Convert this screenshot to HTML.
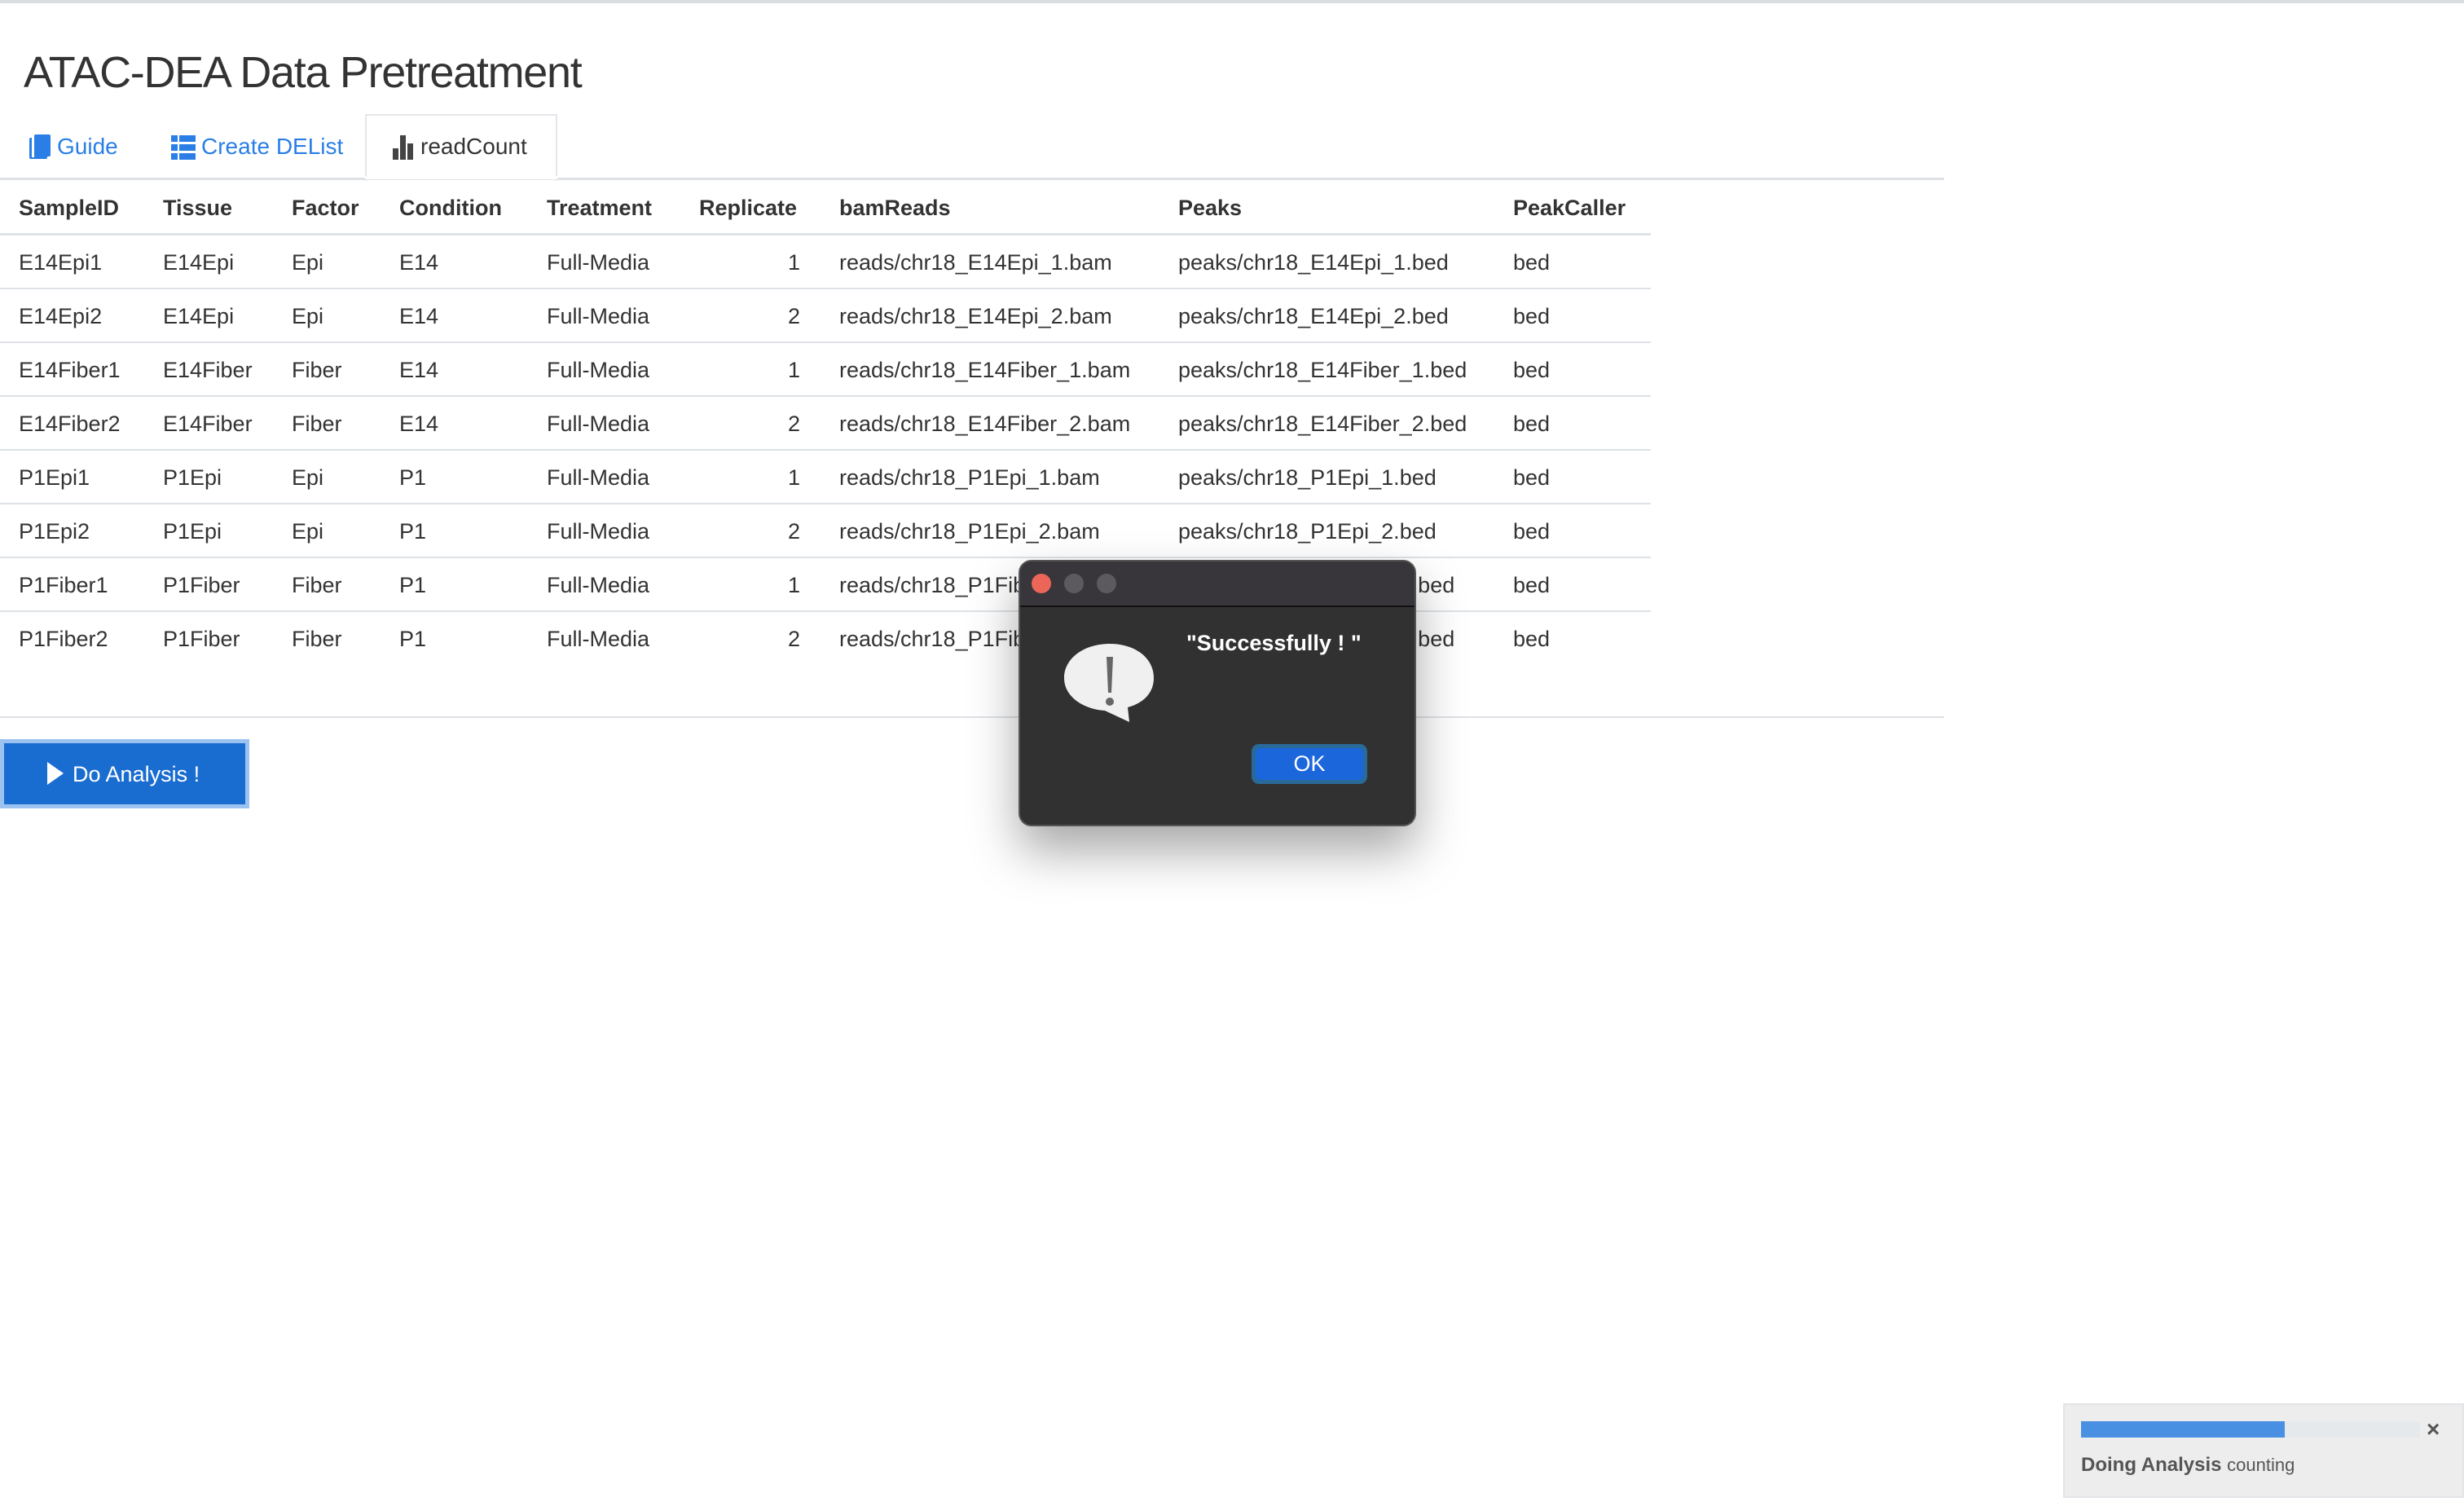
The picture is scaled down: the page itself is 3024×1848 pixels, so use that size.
<!DOCTYPE html>
<html><head><meta charset="utf-8"><style>
*{margin:0;padding:0;box-sizing:border-box}
body{width:3024px;height:1848px;background:#fff;position:relative;overflow:hidden;font-family:"Liberation Sans",sans-serif;color:#333}
.a{position:absolute;white-space:nowrap}
.c{position:absolute;font-size:27px;color:#333;white-space:nowrap}
.h{font-weight:bold;font-size:27px}
.line{position:absolute;left:0;height:3px;background:#dee2e6}
</style></head><body>
<div class="a" style="left:0;top:0;width:3024px;height:4px;background:#dadde0"></div>
<div class="a" style="left:29px;top:58px;font-size:54px;color:#333;letter-spacing:-1.3px">ATAC-DEA Data Pretreatment</div>
<!-- tabs -->
<div class="a" style="left:448px;top:140px;width:236px;height:82px;border:2px solid #e3e6e9;border-bottom:none;background:#fff"></div>
<div class="line" style="top:218px;width:2386px"></div>
<div class="a" style="left:448px;top:216px;width:236px;height:4px;background:#fff"></div>
<svg class="a" style="left:34px;top:164px" width="30" height="32" viewBox="0 0 30 32"><rect x="2" y="5" width="22" height="26" rx="2" fill="#2a7ee6"/><rect x="8" y="1" width="20" height="27" rx="2" fill="#2a7ee6"/><rect x="5" y="4" width="3" height="25" fill="#fff"/></svg>
<div class="a" style="left:70px;top:164px;font-size:28px;color:#2a7ee6">Guide</div>
<svg class="a" style="left:210px;top:166px" width="30" height="30" viewBox="0 0 30 30" fill="#2a7ee6"><rect x="0" y="0" width="8" height="8"/><rect x="10" y="0" width="20" height="8"/><rect x="0" y="11" width="8" height="8"/><rect x="10" y="11" width="20" height="8"/><rect x="0" y="22" width="8" height="8"/><rect x="10" y="22" width="20" height="8"/></svg>
<div class="a" style="left:247px;top:164px;font-size:28px;color:#2a7ee6">Create DEList</div>
<svg class="a" style="left:482px;top:166px" width="28" height="30" viewBox="0 0 28 30" fill="#444"><rect x="0" y="16" width="7" height="14"/><rect x="9" y="0" width="7" height="30"/><rect x="18" y="10" width="7" height="20"/></svg>
<div class="a" style="left:516px;top:164px;font-size:28px;color:#333">readCount</div>
<!-- table -->
<div class="line" style="top:286px;width:2026px"></div>
<div class="c h" style="left:23px;top:240px">SampleID</div>
<div class="c h" style="left:200px;top:240px">Tissue</div>
<div class="c h" style="left:358px;top:240px">Factor</div>
<div class="c h" style="left:490px;top:240px">Condition</div>
<div class="c h" style="left:671px;top:240px">Treatment</div>
<div class="c h" style="left:858px;top:240px">Replicate</div>
<div class="c h" style="left:1030px;top:240px">bamReads</div>
<div class="c h" style="left:1446px;top:240px">Peaks</div>
<div class="c h" style="left:1857px;top:240px">PeakCaller</div>
<div id="rows"></div>
<script>
var d=[["E14Epi1","E14Epi","Epi","E14",1,"reads/chr18_E14Epi_1.bam","peaks/chr18_E14Epi_1.bed"],
["E14Epi2","E14Epi","Epi","E14",2,"reads/chr18_E14Epi_2.bam","peaks/chr18_E14Epi_2.bed"],
["E14Fiber1","E14Fiber","Fiber","E14",1,"reads/chr18_E14Fiber_1.bam","peaks/chr18_E14Fiber_1.bed"],
["E14Fiber2","E14Fiber","Fiber","E14",2,"reads/chr18_E14Fiber_2.bam","peaks/chr18_E14Fiber_2.bed"],
["P1Epi1","P1Epi","Epi","P1",1,"reads/chr18_P1Epi_1.bam","peaks/chr18_P1Epi_1.bed"],
["P1Epi2","P1Epi","Epi","P1",2,"reads/chr18_P1Epi_2.bam","peaks/chr18_P1Epi_2.bed"],
["P1Fiber1","P1Fiber","Fiber","P1",1,"reads/chr18_P1Fiber_1.bam","peaks/chr18_P1Fiber_1.bed"],
["P1Fiber2","P1Fiber","Fiber","P1",2,"reads/chr18_P1Fiber_2.bam","peaks/chr18_P1Fiber_2.bed"]];
var h="",xs=[23,200,358,490];
d.forEach(function(r,i){var t=307+i*66;
for(var k=0;k<4;k++)h+='<div class="c" style="left:'+xs[k]+'px;top:'+t+'px">'+r[k]+'</div>';
h+='<div class="c" style="left:671px;top:'+t+'px">Full-Media</div>';
h+='<div class="c" style="left:940px;width:42px;text-align:right;top:'+t+'px">'+r[4]+'</div>';
h+='<div class="c" style="left:1030px;top:'+t+'px">'+r[5]+'</div>';
h+='<div class="c" style="left:1446px;top:'+t+'px">'+r[6]+'</div>';
h+='<div class="c" style="left:1857px;top:'+t+'px">bed</div>';
if(i<7)h+='<div class="line" style="top:'+(353+i*66)+'px;width:2026px;height:2px"></div>';});
document.getElementById("rows").innerHTML=h;
</script>
<div class="line" style="top:879px;width:2386px;height:2px"></div>
<!-- button -->
<div class="a" style="left:0;top:907px;width:306px;height:85px;background:#1a6dd0;border:5px solid #9cc3f0"></div>
<svg class="a" style="left:58px;top:935px" width="20" height="28" viewBox="0 0 20 28"><path d="M0 0L20 14L0 28Z" fill="#fff"/></svg>
<div class="a" style="left:89px;top:935px;font-size:27px;color:#fff">Do Analysis !</div>
<!-- dialog -->
<div class="a" style="left:1250px;top:687px;width:488px;height:327px;background:#313131;border:2px solid #555;border-radius:16px;box-shadow:0 30px 60px rgba(0,0,0,.35);overflow:hidden">
<div style="height:56px;background:#38363b;border-bottom:2px solid #111"></div>
</div>
<div class="a" style="left:1266px;top:704px;width:24px;height:24px;border-radius:50%;background:#ec6559"></div>
<div class="a" style="left:1306px;top:704px;width:24px;height:24px;border-radius:50%;background:#5c5a5f"></div>
<div class="a" style="left:1346px;top:704px;width:24px;height:24px;border-radius:50%;background:#5c5a5f"></div>
<svg class="a" style="left:1302px;top:788px" width="120" height="104" viewBox="0 0 120 104"><path d="M60 2C28 2 4 20 4 44C4 66 26 82 54 84L84 98L82 80C104 74 114 60 114 44C114 20 92 2 60 2Z" fill="#f0f0f0"/><path d="M56 18L64 18L62 62L58 62Z" fill="#666"/><circle cx="60" cy="73" r="5" fill="#666"/></svg>
<div class="a" style="left:1456px;top:774px;font-size:27px;font-weight:bold;color:#fff">"Successfully ! "</div>
<div class="a" style="left:1536px;top:913px;width:142px;height:49px;border-radius:9px;background:#2a6a9a;padding:5px">
<div style="width:100%;height:100%;border-radius:6px;background:#1c66dc;color:#fff;font-size:27px;text-align:center;line-height:39px">OK</div></div>
<!-- notification -->
<div class="a" style="left:2532px;top:1722px;width:492px;height:116px;background:#ededed;border:2px solid #e2e4e7"></div>
<div class="a" style="left:2554px;top:1744px;width:416px;height:20px;background:#e6e9ec"></div>
<div class="a" style="left:2554px;top:1744px;width:250px;height:20px;background:#4a90e2"></div>
<div class="a" style="left:2978px;top:1738px;font-size:28px;font-weight:bold;color:#555">×</div>
<div class="a" style="left:2554px;top:1784px;font-size:24px;color:#555"><b>Doing Analysis</b> <span style="font-size:22px">counting</span></div>
</body></html>
